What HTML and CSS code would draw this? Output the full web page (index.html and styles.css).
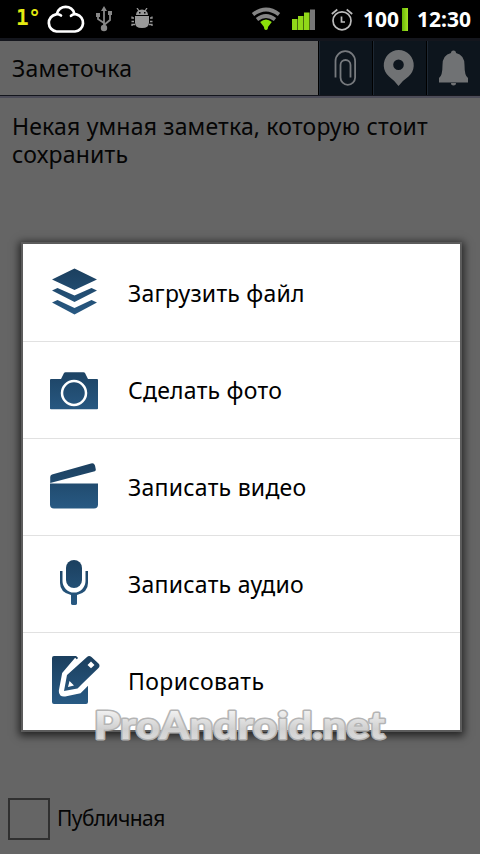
FILE: index.html
```
<!DOCTYPE html>
<html lang="ru">
<head>
<meta charset="utf-8">
<title>Заметочка</title>
<link rel="stylesheet" href="styles.css">
</head>
<body>
<div class="screen">
  <header class="status">
    <span class="temp">1°</span>
    <svg class="cloud" width="40" height="32" viewBox="0 0 40 32"><path d="M15 13.500q-2.200-1.700-5-1.200A8.700 8.700 0 0 0 10.500 29.500H29A8.700 8.700 0 0 0 30.500 12.400q-3-.7-5.500 1.400M11 11.500A9 9 0 0 1 28.400 11.500"/></svg>
    <svg class="usb" width="18" height="26" viewBox="0 0 18 26"><path d="M9 4v18M9 17l-6-4V9M9 19l6-5V7" fill="none" stroke="#888" stroke-width="1.800"/><path d="M9 0l3 5H6zM1 7h4v4H1zM13 5h4v4h-4z"/><circle cx="9" cy="22" r="3.200"/></svg>
    <svg class="bug" width="22" height="21" viewBox="0 0 22 21"><path d="M5 7a6 5.500 0 0 1 12 0zM4 8h14v6.500q0 5.500-7 5.500t-7-5.500z"/><path d="M6 0l2 3M16 0l-2 3M3 10H1V8.500M3 13.500H.5M4 16.500H1V18M19 10h2V8.500M19 13.500h2.500M18 16.500h3V18" fill="none" stroke="#999" stroke-width="1.300"/><path d="M8 4h1.500v1.500H8zM13 4h1.500v1.500H13z" fill="#000"/></svg>
    <svg class="wifi" width="30" height="24" viewBox="0 0 30 24"><g fill="none" stroke="#858585" stroke-width="3.800"><path d="M2 7.500q13-10 26 0M6 12.500q9-7 18 0"/></g><path d="M15 23q-2 0-2-3l-3.800-5q5.800-5 11.600 0L17 20q0 3-2 3z" fill="#8be00a"/></svg>
    <svg class="signal" width="26" height="24" viewBox="0 0 26 24"><path d="M0 12h5.500v11H0zM6 9h5.500v14H6zM12 5.500h5.500V23H12z" fill="#91d719"/><path d="M18 2.500h5V23h-5z" fill="#777"/></svg>
    <svg class="alarm" width="22" height="23" viewBox="0 0 22 23"><g fill="none" stroke="#bbb" stroke-width="1.700"><circle cx="11" cy="12.800" r="9"/><path d="M.8 6l5.500-4.500M21.200 6l-5.500-4.500M10.500 8.500V14H14"/></g></svg>
    <span class="percent">100</span>
    <i class="battery"></i>
    <span class="clock">12:30</span>
  </header>
  <div class="toolbar">
    <div class="title">Заметочка</div>
    <div class="tool"><svg width="54" height="54" viewBox="0 0 54 54"><path d="M16.500 36.500V20a9.800 9.800 0 0 1 19.600 0v16.500a7.300 7.300 0 0 1-14.600 0V24a5 5 0 0 1 10 0v12.500" fill="none" stroke="#777a7e" stroke-width="1.800"/></svg></div>
    <div class="tool"><svg width="53" height="54" viewBox="0 0 53 54"><path d="M25.500 45Q22 40 16 35.500a15 15 0 1 1 19.500 0Q29 40 25.500 45zM25.500 18.500a5.300 5.300 0 1 0 0 10.600 5.300 5.300 0 0 0 0-10.600z" fill="#707274" fill-rule="evenodd"/></svg></div>
    <div class="tool"><svg width="52" height="54" viewBox="0 0 52 54"><path d="M24 12q0-2.500 2.500-2.500T29 12q8.500 2 8.500 12 0 11 3.500 13v4.500H12V37q3.500-2 3.500-13 0-10 8.500-12zM24 42h5q0 2.500-2.500 2.500T24 42z" fill="#707274"/></svg></div>
  </div>
  <main class="note">Некая умная заметка, которую стоит<br>сохранить</main>
  <label class="public"><i class="box"></i><span>Публичная</span></label>
  <svg width="0" height="0" class="defs"><defs><linearGradient id="blue" gradientUnits="userSpaceOnUse" x1="0" y1="0" x2="0" y2="48"><stop offset="0" stop-color="#1b3f5e"/><stop offset="1" stop-color="#285a84"/></linearGradient></defs></svg>
  <div class="dialog">
    <div class="row"><svg class="ico" width="50" height="50" viewBox="0 0 50 50"><path d="M25.500 .5L48 11.500 25.500 22 3 11.500zM3 22.500L8.500 20l17 7.500 17-7.500L48 22.500 25.500 34zM3 34.500L8.500 32l17 8 17-8 5.500 2.500-22.500 12z"/></svg><span>Загрузить файл</span></div>
    <div class="row"><svg class="ico" width="50" height="50" viewBox="0 0 50 50"><path d="M2 14h10l3-6q.5-.8 1.500-.8h18q1 0 1.500.8l3 6h9q1 0 1 1v28.500q0 .8-1 .8H2q-1 0-1-.8V15q0-1 1-1z"/><circle cx="25" cy="28" r="12" class="ring"/></svg><span>Сделать фото</span></div>
    <div class="row"><svg class="ico" width="50" height="50" viewBox="0 0 50 50"><path d="M3 12.500L42 1.500q3-.8 4 2l.8 4q.2 1.300-1 1.700L1.200 21v-6q0-2 1.800-2.500zM1 21.500h48v21q0 4-4 4H5q-4 0-4-4z"/></svg><span>Записать видео</span></div>
    <div class="row"><svg class="ico" width="50" height="50" viewBox="0 0 50 50"><rect x="17" y="1" width="16" height="28" rx="8"/><path d="M11 12h2.500v10a11.500 11.500 0 0 0 23 0V12H39v12q0 9.500-11 12v8.500q0 1.500-3 1.500t-3-1.500V36q-11-2.500-11-12z"/></svg><span>Записать аудио</span></div>
    <div class="row"><svg class="ico" width="52" height="50" viewBox="0 0 52 50"><path d="M5 0h22q1.500 1 2 2L16 17l-3 20 16-1 10-10v20q0 2-2 2H5q-2 0-2-2V2q0-2 2-2z"/><path d="M28 3.500L15.500 18l-3.200 17q-.3 3.500 3.500 3l14.500-3 10-10" class="cut"/><path d="M38 1q2-2 4.500 0l7 6.500q2 2 0 4.500L33 28l-4.500 4.500L15 35l3-16zM20.500 25l-1.500 6 6-1.500zM42 5.500L38.500 9l3.500 3.300L45.500 9z" fill-rule="evenodd"/></svg><span>Порисовать</span></div>
  </div>
  <svg class="mark" width="310" height="50" viewBox="0 0 310 50"><defs><linearGradient id="silver" x1="0" y1="0" x2="0" y2="1"><stop offset=".2" stop-color="#f0f0f0"/><stop offset=".6" stop-color="#d0d0d0"/><stop offset="1" stop-color="#e2e2e2"/></linearGradient></defs><text x="9" y="35" textLength="291" lengthAdjust="spacingAndGlyphs">ProAndroid.net</text></svg>
</div>
</body>
</html>
```
FILE: styles.css
```
* { box-sizing: border-box; }
body { margin: 0; }
.screen {
  position: relative;
  width: 480px;
  height: 854px;
  display: flex;
  flex-direction: column;
  overflow: hidden;
  background: #656565;
  color: #050505;
  font-family: "Noto Sans", "Open Sans", sans-serif;
  font-size: 23px;
}
svg { display: block; flex: none; }
.status {
  height: 38px;
  flex: none;
  display: flex;
  align-items: center;
  background: #000;
  color: #fff;
  font: bold 21px/38px "Noto Sans", sans-serif;
}
.temp { flex: none; width: 30px; margin-left: 16px; margin-top: -2px; color: #e4eb12; font: bold 21px/34px "DejaVu Sans Mono", monospace; letter-spacing: -.5px; }
.cloud { margin-top: -2px; fill: none; stroke: #fff; stroke-width: 2.7; stroke-linecap: round; }
.usb { margin-left: 9px; fill: #888; }
.bug { margin: -2px 0 0 18px; fill: #999; }
.wifi { margin-left: 98px; }
.signal { margin-left: 11px; }
.alarm { margin-left: 13px; }
.percent { width: 37px; margin-left: 10px; }
.battery { width: 6px; height: 23px; margin: 0 0 0 2px; background: linear-gradient(90deg, #69b807, #a5e524); }
.clock { margin-left: 9px; white-space: nowrap; }
.toolbar {
  display: flex;
  flex: none;
  height: 60px;
  padding-top: 3px;
  background: #14161d;
  border-bottom: 2px solid #4c4c58;
}
.title {
  width: 318px;
  height: 54px;
  padding-left: 12px;
  background: #656565;
  line-height: 55px;
  letter-spacing: .25px;
}
.tool { flex: 1; height: 54px; background: #0d151d; border-left: 1px solid #000; box-shadow: inset 1px 0 #1e2833; overflow: hidden; }
.note { padding: 14px 12px 0; line-height: 28px; letter-spacing: .18px; white-space: nowrap; }
.public { display: flex; align-items: center; margin: auto 0 14px 8px; font-size: 21px; letter-spacing: -.6px; gap: 7px; }
.public span { margin-top: -2px; }
.box { width: 42px; height: 42px; border: 2px solid #303030; }
.defs { position: absolute; }
.dialog {
  position: absolute;
  left: 21px;
  top: 242px;
  width: 441px;
  height: 490px;
  border: 2px solid #5c5c5c;
  background: #fff;
  box-shadow: 0 2px 8px 2px rgba(0,0,0,.65);
  color: #000;
}
.row { height: 97px; display: flex; align-items: center; padding-left: 26px; border-bottom: 1px solid #e1e1e1; }
.row:first-child { height: 98px; }
.row:last-child { border: 0; padding-bottom: 2px; }
.row span { margin-left: 29px; letter-spacing: .25px; }
.row:last-child span { margin-left: 27px; letter-spacing: .4px; }
.ico { fill: url(#blue); }
.ring { fill: none; stroke: #fff; stroke-width: 2.5; }
.cut { fill: none; stroke: #fff; stroke-width: 5; }
.mark { position: absolute; left: 85px; top: 704px; }
.mark text { font: 900 37px Lato, sans-serif; fill: url(#silver); stroke: #b4b4b4; stroke-width: 3px; stroke-linejoin: round; paint-order: stroke; }
```
